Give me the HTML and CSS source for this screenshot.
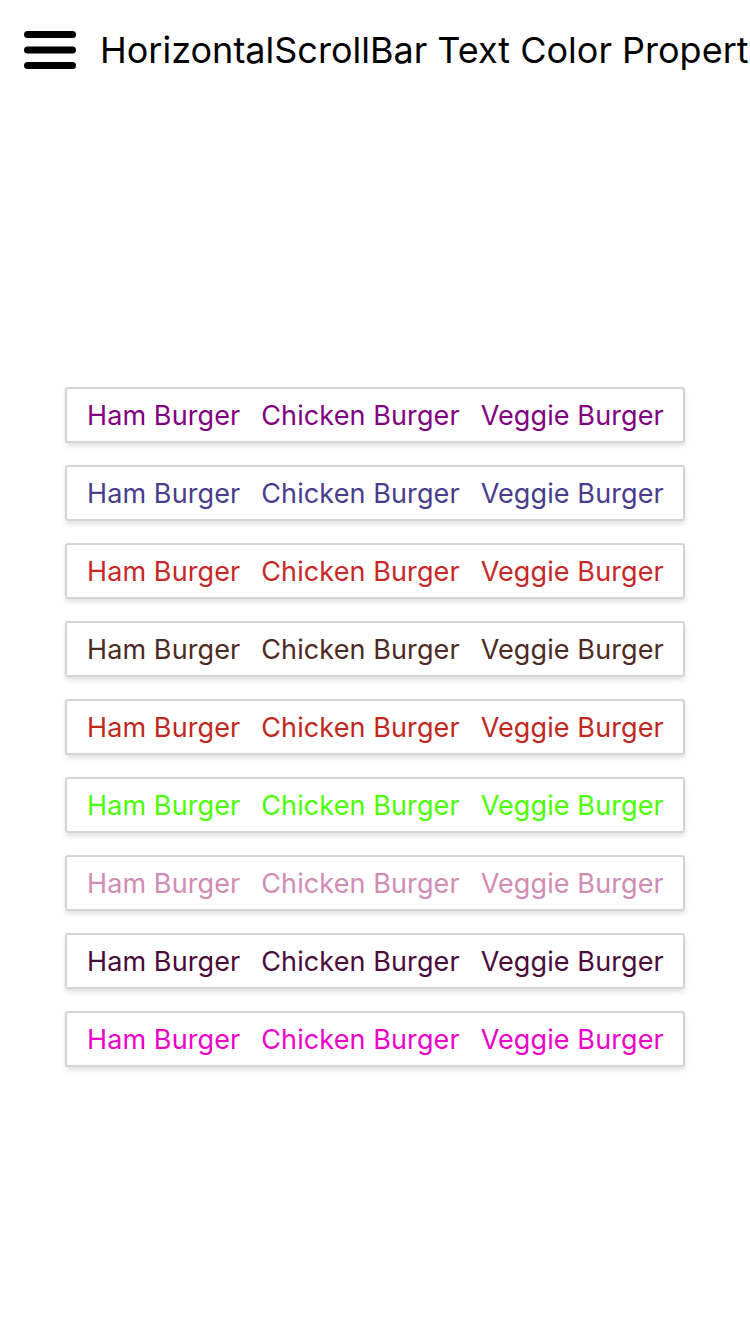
FILE: index.html
```html
<!DOCTYPE html>
<html>
<head>
<meta charset="utf-8">
<link rel="stylesheet" href="styles.css">
</head>
<body>
<header class="header">
  <svg class="menu" width="52" height="38" viewBox="0 0 52 38">
    <rect x="0" y="0" width="52" height="7" rx="3.5" fill="#000"/>
    <rect x="0" y="15.5" width="52" height="7" rx="3.5" fill="#000"/>
    <rect x="0" y="31" width="52" height="7" rx="3.5" fill="#000"/>
  </svg>
  <div class="title">HorizontalScrollBar Text Color Property</div>
</header>
<main class="list">
  <div class="bar c1"><span>Ham Burger</span><span>Chicken Burger</span><span>Veggie Burger</span></div>
  <div class="bar c2"><span>Ham Burger</span><span>Chicken Burger</span><span>Veggie Burger</span></div>
  <div class="bar c3"><span>Ham Burger</span><span>Chicken Burger</span><span>Veggie Burger</span></div>
  <div class="bar c4"><span>Ham Burger</span><span>Chicken Burger</span><span>Veggie Burger</span></div>
  <div class="bar c5"><span>Ham Burger</span><span>Chicken Burger</span><span>Veggie Burger</span></div>
  <div class="bar c6"><span>Ham Burger</span><span>Chicken Burger</span><span>Veggie Burger</span></div>
  <div class="bar c7"><span>Ham Burger</span><span>Chicken Burger</span><span>Veggie Burger</span></div>
  <div class="bar c8"><span>Ham Burger</span><span>Chicken Burger</span><span>Veggie Burger</span></div>
  <div class="bar c9"><span>Ham Burger</span><span>Chicken Burger</span><span>Veggie Burger</span></div>
</main>
</body>
</html>
```
FILE: styles.css
```css
html, body {
  margin: 0;
  padding: 0;
  background: #fff;
  width: 750px;
  height: 1334px;
  overflow: hidden;
  font-family: Inter, "Noto Sans", "Liberation Sans", sans-serif;
}
.header {
  height: 100px;
  display: flex;
  align-items: center;
  padding-left: 24px;
  white-space: nowrap;
  overflow: hidden;
}
.menu {
  flex: none;
  margin-right: 24px;
}
.title {
  font-size: 36px;
  color: #000;
  letter-spacing: 0;
}
.list {
  margin-top: 287px;
  display: flex;
  flex-direction: column;
  align-items: center;
  gap: 22px;
}
.bar {
  box-sizing: border-box;
  width: 620px;
  height: 56px;
  border: 2px solid #d4d4d4;
  border-radius: 3px;
  box-shadow: 0 3px 5px rgba(0,0,0,0.12);
  display: flex;
  align-items: center;
  gap: 21px;
  padding-left: 20px;
  font-size: 27px;
  letter-spacing: 0.1px;
  white-space: nowrap;
  overflow: hidden;
}
.c1 { color: #800080; }
.c2 { color: #483d8b; }
.c3 { color: #c62828; }
.c4 { color: #4e2a25; }
.c5 { color: #c0281e; }
.c6 { color: #4cff00; }
.c7 { color: #d08cb4; }
.c8 { color: #4a0a3a; }
.c9 { color: #ee00c8; }
```
